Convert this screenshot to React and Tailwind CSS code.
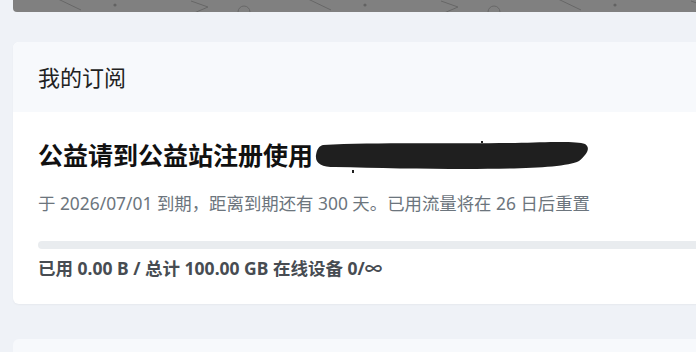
function Banner() {
  return (
    <div className="h-3 w-full overflow-hidden rounded-bl-[4px] bg-[#808080]">
      <svg width="100%" height="12" className="block">
        <defs>
          <pattern id="bg-shapes" width="250" height="12" patternUnits="userSpaceOnUse">
            <line x1="45" y1="-1" x2="68" y2="10" stroke="#666" strokeWidth="1" />
            <circle cx="102" cy="5" r="1.6" fill="#626262" />
            <path d="M178 1 L195 7 L181 13" fill="none" stroke="#666" strokeWidth="1" />
            <circle cx="231" cy="12" r="6" fill="none" stroke="#666" strokeWidth="1" />
          </pattern>
        </defs>
        <rect width="100%" height="12" fill="url(#bg-shapes)" />
      </svg>
    </div>
  )
}

function Redaction() {
  return (
    <svg width="276" height="32" viewBox="0 0 276 32" className="ml-[2px] mt-[4px] block">
      <path
        d="M8 4 C60 1 140 3 200 2 C235 1 262 0 270 3 C276 7 272 13 264 20 C250 27 200 28 150 28 C110 28 60 27 20 26 C6 26 0 22 1 14 C2 8 4 5 8 4 Z"
        fill="#1f1f1f"
      />
      <rect x="166" y="0" width="2" height="2" fill="#1f1f1f" />
      <rect x="37" y="29" width="2" height="3" fill="#1f1f1f" />
    </svg>
  )
}

function SubscriptionCard() {
  return (
    <div className="w-[760px] overflow-hidden rounded-md bg-white shadow-[0_1px_2px_rgba(0,0,0,0.04)]">
      <div className="flex h-[70px] items-center bg-[#f7f9fc] px-[25px]">
        <h2 className="text-[22px] text-[#222]">我的订阅</h2>
      </div>
      <div className="px-[25px] pb-[24px] pt-[24px]">
        <div className="flex items-center">
          <h3 className="text-[25px] font-bold leading-[38px] text-[#111]">公益请到公益站注册使用</h3>
          <Redaction />
        </div>
        <p className="mt-[17px] text-[17.4px] leading-[24px] text-[#6c757d]">
          于 2026/07/01 到期，距离到期还有 300 天。已用流量将在 26 日后重置
        </p>
        <div className="mt-[26px] h-2 w-full rounded-full bg-[#e9ecef]" />
        <p className="mt-[7px] text-[17.5px] font-bold leading-[24px] text-[#474c52]">
          已用 0.00 B / 总计 100.00 GB 在线设备 0/∞
        </p>
      </div>
    </div>
  )
}

export default function App() {
  return (
    <div
      className="h-[352px] w-[696px] overflow-hidden bg-[#eff2f7] pl-[13px]"
      style={{ fontFamily: '"Noto Sans", "Noto Sans CJK SC", sans-serif' }}
    >
      <div className="w-[760px]">
        <Banner />
      </div>
      <div className="mt-[30px]">
        <SubscriptionCard />
      </div>
      <div className="mt-[35px] h-[60px] w-[760px] rounded-md bg-[#f7f9fc]" />
    </div>
  )
}
